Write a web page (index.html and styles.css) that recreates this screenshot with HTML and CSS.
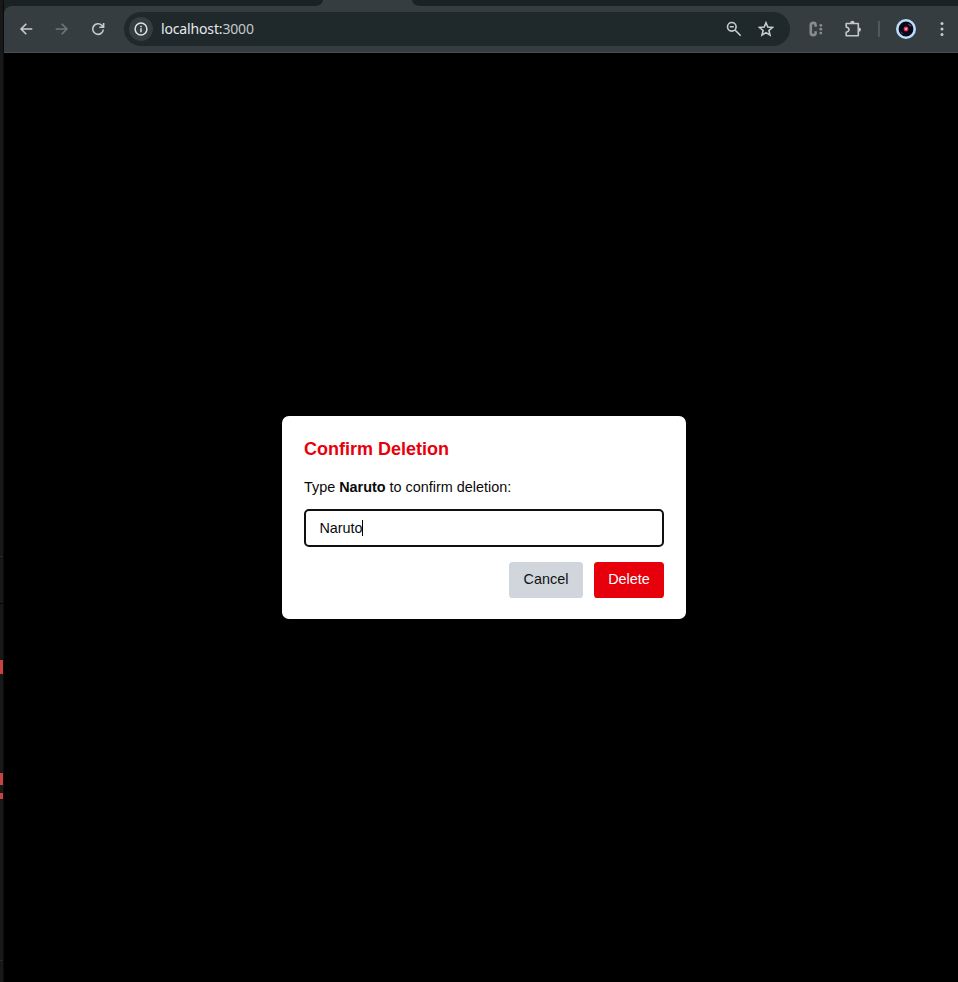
FILE: index.html
```html
<!DOCTYPE html>
<html lang="en">
<head>
<meta charset="utf-8">
<title>localhost:3000</title>
<link rel="stylesheet" href="styles.css">
</head>
<body>
<div class="desktop">
  <aside class="edge">
    <i class="rule first"></i><i class="rule second"></i>
    <i class="mark large"></i><i class="mark medium"></i><i class="mark small"></i>
    <i class="rule last"></i>
  </aside>
  <div class="browser">
    <div class="tabs"><i class="tab-side left"></i><i class="tab-active"></i><i class="tab-side right"></i></div>
    <header class="toolbar">
      <svg class="icon back" viewBox="0 0 16 16"><path d="M14.300 8H3.300M8.300 2.800 3.100 8l5.200 5.200"/></svg>
      <svg class="icon forward" viewBox="0 0 16 16"><path d="M1.700 8h11M7.700 2.800 12.900 8l-5.200 5.200"/></svg>
      <svg class="icon reload" viewBox="0 0 16 16"><path d="M13.300 8.500A5.300 5.300 0 1 1 11.800 4.300L13.500 6M13.600 2v4.300H9.300"/></svg>
      <div class="address">
        <span class="info"><svg class="icon" viewBox="0 0 16 16"><circle cx="8" cy="8" r="5.900"/><path d="M8 7.200v4M8 4.700v1.500"/></svg></span>
        <span class="url">localhost:<span class="port">3000</span></span>
        <svg class="icon lens" viewBox="0 0 16 16"><circle cx="5.800" cy="5.800" r="4.300"/><path d="M3.800 5.800h4M9 9l5.700 5.700"/></svg>
        <svg class="icon star" viewBox="0 0 16 16"><path d="M8 1.700 9.800 6l4.700.4-3.600 3.100 1.100 4.600L8 11.600l-4 2.500 1.100-4.600L1.500 6.400 6.200 6Z"/></svg>
      </div>
      <svg class="ext" viewBox="0 0 16 16"><path d="M7.600 5.700V4Q7.600 1.900 5.200 1.900T2.800 4v8q0 2.100 2.400 2.100T7.600 12v-1.700"/><g><circle cx="12.800" cy="4.300" r="1.400"/><circle cx="12.800" cy="8.200" r="1.400"/><circle cx="12.800" cy="12.100" r="1.400"/></g></svg>
      <svg class="puzzle" viewBox="0 0 18 18"><path d="M2.200 3.500H14.300V15.800H2.200V12.200Q5 11.600 5 9.600T2.200 7Z"/><path class="knob" d="M6.200 3a2.200 2.200 0 0 1 4.400 0ZM14.800 7.400a2.200 2.200 0 0 1 0 4.400Z"/></svg>
      <i class="divider"></i>
      <svg class="avatar" viewBox="0 0 20 20"><circle cx="10" cy="10" r="8.700" fill="#080719" stroke="#b9ddfb" stroke-width="2.600"/><path d="M12 4.500 15 6l.5 2-3-2ZM4.500 12l3 3-2-.5Z" fill="#51546a"/><circle cx="10" cy="10" r="2.400" fill="#ec3158"/><circle cx="10" cy="10" r=".9" fill="#ffd2aa"/></svg>
      <svg class="more" viewBox="0 0 4 16"><circle cx="2" cy="2.500" r="1.500"/><circle cx="2" cy="8" r="1.500"/><circle cx="2" cy="13.500" r="1.500"/></svg>
    </header>
    <main class="page">
      <section class="dialog">
        <h1>Confirm Deletion</h1>
        <p>Type <strong>Naruto</strong> to confirm deletion:</p>
        <div class="field"><span>Naruto</span><i class="caret"></i></div>
        <div class="actions">
          <button class="cancel">Cancel</button>
          <button class="delete">Delete</button>
        </div>
      </section>
    </main>
  </div>
</div>
</body>
</html>
```
FILE: styles.css
```css
* { box-sizing: border-box; }
body { margin: 0; background: #000; overflow: hidden; }
svg, i { display: block; flex: none; }
.desktop { display: flex; height: 982px; }
.edge { width: 4px; background: #181818; border-right: 1px solid #0b0b0b; flex: none; }
.rule { height: 1px; background: #292929; }
.rule.first { margin-top: 556px; }
.rule.second { margin-top: 46px; background: #050505; }
.mark { width: 3px; background: #c74343; }
.mark.large { height: 14px; margin-top: 56px; }
.mark.medium { height: 12px; margin-top: 99px; }
.mark.small { height: 6px; margin-top: 8px; }
.rule.last { margin-top: 161px; }
.browser { flex: 1; min-width: 0; display: flex; flex-direction: column; background: #1b2224; }
.tabs { display: flex; height: 6px; background: #353d40; }
.tab-side { background: #1b2224; }
.tab-side.left { width: 319px; border-bottom-right-radius: 8px 6px; }
.tab-active { width: 89px; }
.tab-side.right { flex: 1; border-bottom-left-radius: 8px 6px; }
.toolbar { display: flex; align-items: center; height: 47px; background: #353d40; border-bottom: 1px solid #484e50; border-top-left-radius: 8px; padding-left: 14px; }
.icon { width: 16px; height: 16px; fill: none; stroke: #c7cdcf; stroke-width: 1.6; }
.forward { stroke: #70777a; margin-left: 20px; }
.reload { margin-left: 20px; }
.address { width: 666px; height: 34px; margin-left: 18px; display: flex; align-items: center; border-radius: 17px; background: #1f282a; padding: 0 16px 0 5px; }
.info { display: flex; align-items: center; justify-content: center; width: 24px; height: 24px; border-radius: 50%; background: #353d40; }
.info .icon { stroke: #dce2e4; stroke-width: 1.5; }
.url { margin: 0 auto 0 8px; font: 14px/20px "Noto Sans", sans-serif; letter-spacing: -.15px; color: #e6eaeb; }
.port { color: #c3c9cb; }
.star { margin-left: 16px; }
.ext { width: 16px; height: 18px; margin-left: 18px; fill: none; stroke: #898c8d; stroke-width: 2.6; }
.ext g { fill: #898c8d; stroke: none; }
.puzzle { width: 18px; height: 18px; margin-left: 20px; fill: none; stroke: #c2c8ca; stroke-width: 1.6; stroke-linejoin: round; }
.knob { fill: #c2c8ca; stroke: none; }
.divider { width: 2px; height: 16px; margin-left: 16px; background: #51585b; }
.avatar { width: 20px; height: 20px; margin-left: 16px; }
.more { width: 4px; height: 16px; margin-left: 24px; fill: #c7cdcf; }
.page { flex: 1; display: flex; align-items: center; justify-content: center; background: #000; padding-left: 6px; }
.dialog { width: 404px; height: 203px; padding: 20px 22px 21px; border-radius: 7px; background: #fff; font: 14.4px/22px "Liberation Sans", Arial, sans-serif; color: #0a0a0a; }
h1 { margin: 0; font-size: 18px; line-height: 26px; color: #e7000b; }
p { margin: 14px 0 11px; }
.field { display: flex; align-items: center; height: 38px; border: 2px solid #101010; border-radius: 5px; padding-left: 13.4px; }
.caret { width: 1px; height: 16px; background: #000; margin-left: -1px; }
.actions { display: flex; justify-content: flex-end; gap: 11px; margin-top: 15px; }
button { height: 36px; padding: 0 0 2px; border: 0; border-radius: 3.6px; font: inherit; }
.cancel { width: 74px; background: #d1d5dc; color: #101010; }
.delete { width: 70px; background: #e7000b; color: #fff; }
```
